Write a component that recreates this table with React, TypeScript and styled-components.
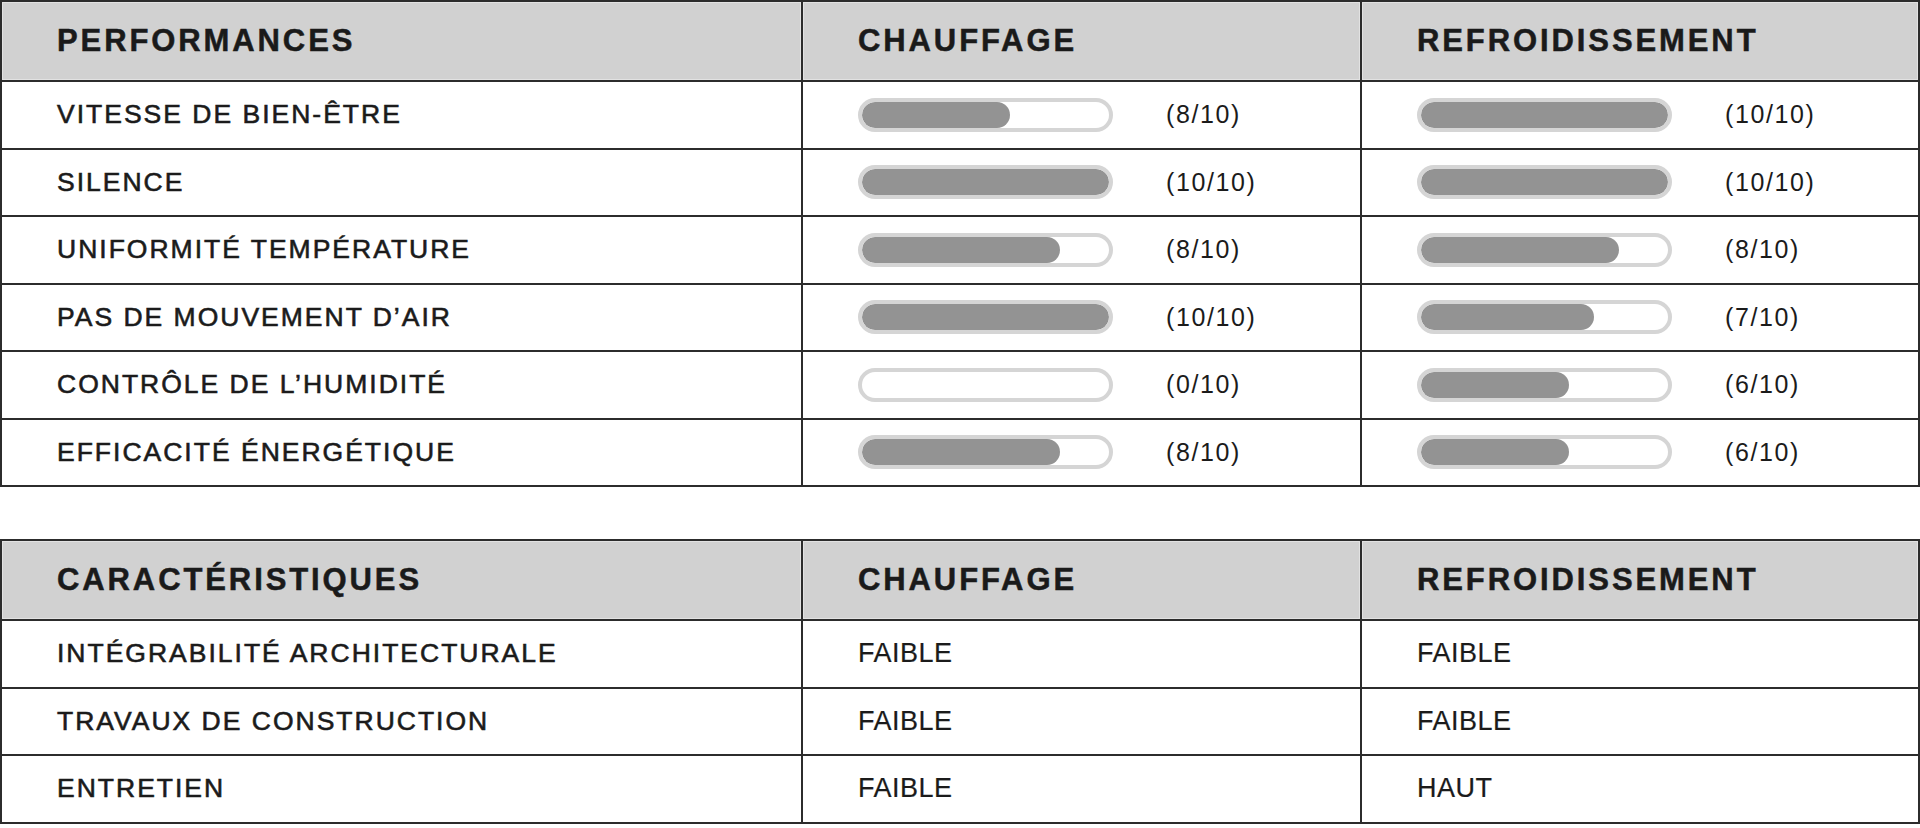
import React from "react";
import styled, { createGlobalStyle } from "styled-components";

const Global = createGlobalStyle`
  html, body { margin: 0; padding: 0; background: #ffffff; }
  body { font-family: "Liberation Sans", Arial, sans-serif; color: #1b1b1b; }
`;

const Page = styled.div`
  display: flex;
  flex-direction: column;
  gap: 52px;
  width: 1920px;
`;

const Table = styled.div<{ $rows: number }>`
  display: grid;
  grid-template-columns: 799px 557px 1fr;
  grid-template-rows: 78px repeat(${(p) => p.$rows}, 65.5px);
  gap: 2px;
  padding: 2px;
  background: #2c2c2c;
  box-sizing: border-box;
  width: 1920px;
`;

const HeadCell = styled.div`
  display: flex;
  align-items: center;
  padding-left: 55px;
  background: #d1d1d1;
  box-shadow: inset 0 0 0 1px #e2e2e2;
  font-family: "Liberation Sans", Arial, sans-serif;
  font-weight: 700;
  font-size: 31px;
  letter-spacing: 2.9px;
  -webkit-text-stroke: 0.5px #1a1a1a;
  color: #1a1a1a;
`;

const LabelCell = styled.div`
  display: flex;
  align-items: center;
  padding-left: 55px;
  background: #ffffff;
  font-size: 26.5px;
  letter-spacing: 2px;
  -webkit-text-stroke: 0.6px #1b1b1b;
  color: #1b1b1b;
`;

const ValueCell = styled.div`
  display: flex;
  align-items: center;
  padding-left: 55px;
  background: #ffffff;
`;

const Track = styled.div`
  width: 255px;
  height: 34px;
  box-sizing: border-box;
  border: 4px solid #d5d5d5;
  border-radius: 17px;
  background: #ffffff;
  overflow: hidden;
  display: flex;
`;

const Fill = styled.div`
  height: 100%;
  border-radius: 13px;
  background: #939393;
`;

const Score = styled.span`
  margin-left: 53px;
  font-size: 25px;
  letter-spacing: 1.6px;
  color: #1b1b1b;
`;

const Level = styled.span`
  font-size: 27px;
  letter-spacing: 0.5px;
  -webkit-text-stroke: 0.2px #1b1b1b;
  color: #1b1b1b;
`;

type Perf = { label: string; heat: number; heatFill: number; cool: number; coolFill: number };

const perf: Perf[] = [
  { label: "VITESSE DE BIEN-ÊTRE", heat: 8, heatFill: 60, cool: 10, coolFill: 100 },
  { label: "SILENCE", heat: 10, heatFill: 100, cool: 10, coolFill: 100 },
  { label: "UNIFORMITÉ TEMPÉRATURE", heat: 8, heatFill: 80, cool: 8, coolFill: 80 },
  { label: "PAS DE MOUVEMENT D’AIR", heat: 10, heatFill: 100, cool: 7, coolFill: 70 },
  { label: "CONTRÔLE DE L’HUMIDITÉ", heat: 0, heatFill: 0, cool: 6, coolFill: 60 },
  { label: "EFFICACITÉ ÉNERGÉTIQUE", heat: 8, heatFill: 80, cool: 6, coolFill: 60 },
];

const chars = [
  { label: "INTÉGRABILITÉ ARCHITECTURALE", heat: "FAIBLE", cool: "FAIBLE" },
  { label: "TRAVAUX DE CONSTRUCTION", heat: "FAIBLE", cool: "FAIBLE" },
  { label: "ENTRETIEN", heat: "FAIBLE", cool: "HAUT" },
];

const Rating: React.FC<{ value: number; fill: number }> = ({ value, fill }) => (
  <ValueCell>
    <Track>{fill > 0 && <Fill style={{ width: `${fill}%` }} />}</Track>
    <Score>({value}/10)</Score>
  </ValueCell>
);

export default function App() {
  return (
    <>
      <Global />
      <Page>
        <Table $rows={perf.length}>
          <HeadCell>PERFORMANCES</HeadCell>
          <HeadCell>CHAUFFAGE</HeadCell>
          <HeadCell>REFROIDISSEMENT</HeadCell>
          {perf.map((r) => (
            <React.Fragment key={r.label}>
              <LabelCell>{r.label}</LabelCell>
              <Rating value={r.heat} fill={r.heatFill} />
              <Rating value={r.cool} fill={r.coolFill} />
            </React.Fragment>
          ))}
        </Table>
        <Table $rows={chars.length}>
          <HeadCell>CARACTÉRISTIQUES</HeadCell>
          <HeadCell>CHAUFFAGE</HeadCell>
          <HeadCell>REFROIDISSEMENT</HeadCell>
          {chars.map((r) => (
            <React.Fragment key={r.label}>
              <LabelCell>{r.label}</LabelCell>
              <ValueCell>
                <Level>{r.heat}</Level>
              </ValueCell>
              <ValueCell>
                <Level>{r.cool}</Level>
              </ValueCell>
            </React.Fragment>
          ))}
        </Table>
      </Page>
    </>
  );
}
